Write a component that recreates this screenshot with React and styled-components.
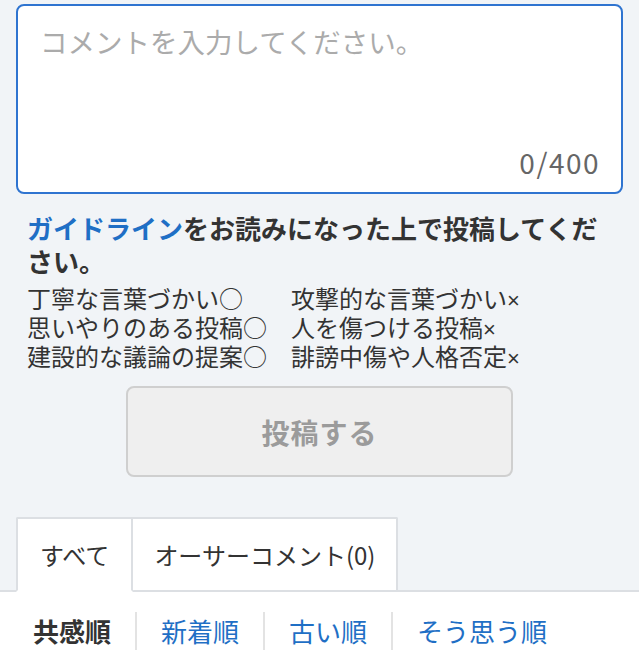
import React from "react";
import styled, { createGlobalStyle } from "styled-components";

const GlobalStyle = createGlobalStyle`
  html, body {
    margin: 0;
    padding: 0;
    background: #f1f4f7;
  }
  body {
    font-family: "Noto Sans CJK JP", "Noto Sans", sans-serif;
    color: #333;
  }
  * { box-sizing: border-box; }
`;

const Page = styled.div`
  width: 639px;
  height: 672px;
  overflow: hidden;
  display: flex;
  flex-direction: column;
  background: #f1f4f7;
`;

const Form = styled.div`
  display: flex;
  flex-direction: column;
  padding: 4px 16px 0;
`;

const InputWrap = styled.div`
  position: relative;
  height: 190px;
  border: 2px solid #2f74d0;
  border-radius: 8px;
  background: #fff;
`;

const TextArea = styled.textarea`
  display: block;
  width: 100%;
  height: 100%;
  border: none;
  outline: none;
  resize: none;
  background: transparent;
  border-radius: 6px;
  padding: 16px 22px;
  font-family: "Noto Sans CJK JP", sans-serif;
  font-size: 27.5px;
  line-height: 38px;
  color: #333;
  &::placeholder {
    color: #ababab;
  }
`;

const Counter = styled.span`
  position: absolute;
  right: 21px;
  bottom: 12px;
  font-size: 28px;
  line-height: 36px;
  color: #666;
  letter-spacing: 1.5px;
`;

const Guide = styled.div`
  padding: 17px 27px 0;
`;

const GuideTitle = styled.p`
  margin: 0;
  font-size: 26px;
  line-height: 33px;
  font-weight: 700;
  color: #333;
`;

const GuideLink = styled.a`
  color: #1f6fc5;
  text-decoration: none;
`;

const Rules = styled.ul`
  list-style: none;
  margin: 6px 0 0;
  padding: 0;
  display: grid;
  grid-template-columns: 264px auto;
`;

const Rule = styled.li`
  font-size: 24px;
  line-height: 29px;
  height: 29px;
  color: #333;
  white-space: nowrap;
`;

const Cross = styled.span`
  font-family: "Liberation Sans", Arial, sans-serif;
  font-size: 22px;
  line-height: 0;
`;

const SubmitRow = styled.div`
  display: flex;
  justify-content: center;
  padding-top: 16px;
`;

const SubmitButton = styled.button`
  width: 387px;
  height: 91px;
  border: 2px solid #cfcfcf;
  border-radius: 8px;
  background: #efefef;
  color: #9b9b9b;
  font-family: "Noto Sans CJK JP", sans-serif;
  font-size: 28px;
  font-weight: 700;
  letter-spacing: 1px;
  cursor: default;
`;

const TabBar = styled.div`
  display: flex;
  margin-top: 40px;
  padding-left: 16px;
  border-bottom: 2px solid #dcdfe3;
`;

const Tab = styled.div`
  margin-bottom: -2px;
  height: 75px;
  padding: 0 ${(p) => (p.$active ? "22px" : "21px")};
  display: flex;
  align-items: center;
  background: #fff;
  font-size: 24px;
  color: #333;
  border-top: 2px solid #dcdfe3;
  border-right: 2px solid #dcdfe3;
  border-left: ${(p) => (p.$active ? "2px solid #dcdfe3" : "none")};
  border-bottom: 2px solid ${(p) => (p.$active ? "#fff" : "#dcdfe3")};
  border-radius: ${(p) => (p.$active ? "2px 0 0 0" : "0 2px 0 2px")};
`;

const SortBar = styled.div`
  flex: 1;
  background: #fff;
  display: flex;
  align-items: flex-start;
  padding: 20px 0 0 33px;
`;

const SortItem = styled.a`
  display: block;
  font-size: 26px;
  line-height: 38px;
  padding: 0 24px;
  text-decoration: none;
  color: ${(p) => (p.$active ? "#333" : "#1f6fc5")};
  font-weight: ${(p) => (p.$active ? 700 : 400)};
  border-left: 2px solid #e3e3e3;
  &:first-child {
    padding-left: 0;
    border-left: none;
  }
`;

const rules = [
  { text: "丁寧な言葉づかい", ok: true },
  { text: "攻撃的な言葉づかい", ok: false },
  { text: "思いやりのある投稿", ok: true },
  { text: "人を傷つける投稿", ok: false },
  { text: "建設的な議論の提案", ok: true },
  { text: "誹謗中傷や人格否定", ok: false },
];

const sorts = ["共感順", "新着順", "古い順", "そう思う順"];

export default function App() {
  return (
    <>
      <GlobalStyle />
      <Page>
        <Form>
          <InputWrap>
            <TextArea placeholder="コメントを入力してください。" />
            <Counter>0/400</Counter>
          </InputWrap>
        </Form>
        <Guide>
          <GuideTitle>
            <GuideLink href="#">ガイドライン</GuideLink>をお読みになった上で投稿してください。
          </GuideTitle>
          <Rules>
            {rules.map((r) => (
              <Rule key={r.text}>
                {r.text}
                {r.ok ? "○" : <Cross>×</Cross>}
              </Rule>
            ))}
          </Rules>
        </Guide>
        <SubmitRow>
          <SubmitButton type="button">投稿する</SubmitButton>
        </SubmitRow>
        <TabBar>
          <Tab $active>すべて</Tab>
          <Tab>オーサーコメント(0)</Tab>
        </TabBar>
        <SortBar>
          {sorts.map((s, i) => (
            <SortItem key={s} href="#" $active={i === 0}>
              {s}
            </SortItem>
          ))}
        </SortBar>
      </Page>
    </>
  );
}
